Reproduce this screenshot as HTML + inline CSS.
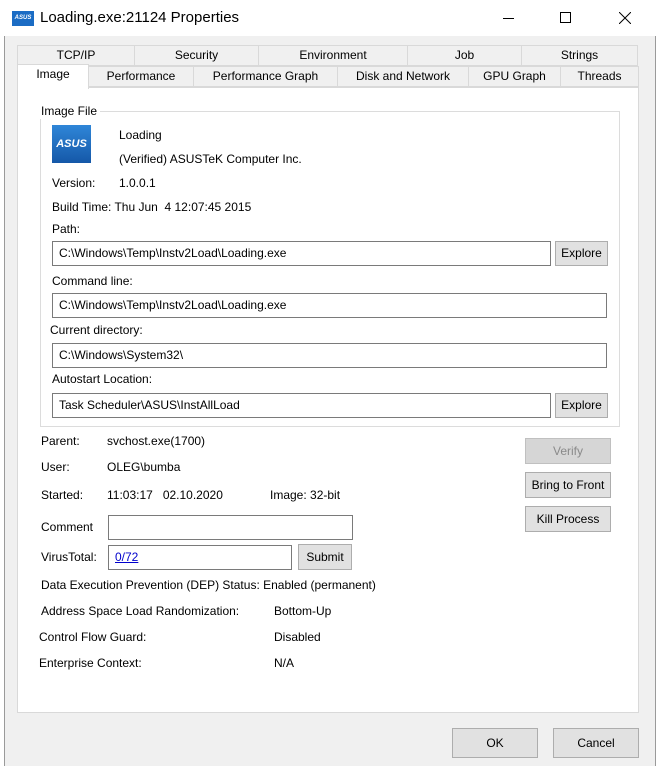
<!DOCTYPE html>
<html><head><meta charset="utf-8"><style>
*{box-sizing:border-box;margin:0;padding:0}
body{width:660px;height:766px;overflow:hidden;background:#fff;font-family:"Liberation Sans",sans-serif;font-size:12px;color:#000;position:relative}
.a{position:absolute;white-space:nowrap;line-height:16px}
.win{position:absolute;left:4px;top:0;width:652px;height:766px;background:#f0f0f0;border-left:1px solid #9a9a9a;border-right:1px solid #9a9a9a}
.title{position:absolute;left:4px;top:0;width:652px;height:36px;background:#fff}
.tab{position:absolute;height:21px;border:1px solid #d9d9d9;background:#f0f0f0;text-align:center;line-height:19px}
.panel{position:absolute;left:17px;top:87px;width:622px;height:626px;background:#fff;border:1px solid #d9d9d9}
.tb{position:absolute;height:25px;border:1px solid #7a7a7a;background:#fff;padding-left:6px;line-height:23px}
.btn{position:absolute;border:1px solid #adadad;background:#e1e1e1;text-align:center}
</style></head><body>
<div class="win"></div>
<div class="title"></div>
<div style="position:absolute;left:12px;top:11px;width:22px;height:15px;background:#1b6cc4;color:#fff;font-size:6px;font-style:italic;font-weight:bold;line-height:15px;text-align:center">ASUS</div>
<div class="a" style="left:40px;top:9px;font-size:15px;line-height:18px">Loading.exe:21124 Properties</div>
<div style="position:absolute;left:503px;top:18px;width:11px;height:1px;background:#000"></div>
<div style="position:absolute;left:560px;top:12px;width:11px;height:11px;border:1px solid #000"></div>
<svg style="position:absolute;left:619px;top:12px" width="12" height="12"><path d="M0 0L12 12M12 0L0 12" stroke="#000" stroke-width="1"/></svg>

<div class="tab" style="left:17px;top:45px;width:118px">TCP/IP</div>
<div class="tab" style="left:134px;top:45px;width:125px">Security</div>
<div class="tab" style="left:258px;top:45px;width:150px">Environment</div>
<div class="tab" style="left:407px;top:45px;width:115px">Job</div>
<div class="tab" style="left:521px;top:45px;width:117px">Strings</div>
<div class="tab" style="left:88px;top:66px;width:106px">Performance</div>
<div class="tab" style="left:193px;top:66px;width:145px">Performance Graph</div>
<div class="tab" style="left:337px;top:66px;width:132px">Disk and Network</div>
<div class="tab" style="left:468px;top:66px;width:93px">GPU Graph</div>
<div class="tab" style="left:560px;top:66px;width:79px">Threads</div>
<div class="panel"></div>
<div class="tab" style="left:17px;top:64px;width:72px;height:25px;background:#fff;border-bottom:none">Image</div>

<div style="position:absolute;left:40px;top:111px;width:580px;height:316px;border:1px solid #dcdcdc"></div>
<div class="a" style="left:38px;top:103px;background:#fff;padding:0 3px">Image File</div>
<div style="position:absolute;left:52px;top:125px;width:39px;height:38px;background:linear-gradient(#2f86d8,#1558a8);color:#fff;font-size:11px;font-style:italic;font-weight:bold;line-height:38px;text-align:center">ASUS</div>
<div class="a" style="left:119px;top:127px">Loading</div>
<div class="a" style="left:119px;top:151px">(Verified) ASUSTeK Computer Inc.</div>
<div class="a" style="left:52px;top:175px">Version:</div>
<div class="a" style="left:119px;top:175px">1.0.0.1</div>
<div class="a" style="left:52px;top:199px">Build Time: Thu Jun &nbsp;4 12:07:45 2015</div>
<div class="a" style="left:52px;top:221px">Path:</div>
<div class="tb" style="left:52px;top:241px;width:499px">C:\Windows\Temp\Instv2Load\Loading.exe</div>
<div class="btn" style="left:555px;top:241px;width:53px;height:25px;line-height:23px">Explore</div>
<div class="a" style="left:52px;top:273px">Command line:</div>
<div class="tb" style="left:52px;top:293px;width:555px">C:\Windows\Temp\Instv2Load\Loading.exe</div>
<div class="a" style="left:50px;top:322px">Current directory:</div>
<div class="tb" style="left:52px;top:343px;width:555px">C:\Windows\System32\</div>
<div class="a" style="left:52px;top:371px">Autostart Location:</div>
<div class="tb" style="left:52px;top:393px;width:499px">Task Scheduler\ASUS\InstAllLoad</div>
<div class="btn" style="left:555px;top:393px;width:53px;height:25px;line-height:23px">Explore</div>

<div class="a" style="left:41px;top:433px">Parent:</div>
<div class="a" style="left:107px;top:433px">svchost.exe(1700)</div>
<div class="a" style="left:41px;top:459px">User:</div>
<div class="a" style="left:107px;top:459px">OLEG\bumba</div>
<div class="a" style="left:41px;top:487px">Started:</div>
<div class="a" style="left:107px;top:487px">11:03:17 &nbsp;&nbsp;02.10.2020</div>
<div class="a" style="left:270px;top:487px">Image: 32-bit</div>
<div class="a" style="left:41px;top:519px">Comment</div>
<div class="tb" style="left:108px;top:515px;width:245px">&nbsp;</div>
<div class="a" style="left:41px;top:549px">VirusTotal:</div>
<div class="tb" style="left:108px;top:545px;width:184px;color:#0000cc;text-decoration:underline;padding-left:6px"><span>0/72</span></div>
<div class="btn" style="left:298px;top:544px;width:54px;height:26px;line-height:24px">Submit</div>
<div class="a" style="left:41px;top:577px">Data Execution Prevention (DEP) Status: Enabled (permanent)</div>
<div class="a" style="left:41px;top:603px">Address Space Load Randomization:</div>
<div class="a" style="left:274px;top:603px">Bottom-Up</div>
<div class="a" style="left:39px;top:629px">Control Flow Guard:</div>
<div class="a" style="left:274px;top:629px">Disabled</div>
<div class="a" style="left:39px;top:655px">Enterprise Context:</div>
<div class="a" style="left:274px;top:655px">N/A</div>

<div class="btn" style="left:525px;top:438px;width:86px;height:26px;line-height:24px;color:#8a8a8a;background:#d6d6d6;border-color:#c0c0c0">Verify</div>
<div class="btn" style="left:525px;top:472px;width:86px;height:26px;line-height:24px">Bring to Front</div>
<div class="btn" style="left:525px;top:506px;width:86px;height:26px;line-height:24px">Kill Process</div>

<div class="btn" style="left:452px;top:728px;width:86px;height:30px;line-height:28px">OK</div>
<div class="btn" style="left:553px;top:728px;width:86px;height:30px;line-height:28px">Cancel</div>
</body></html>
